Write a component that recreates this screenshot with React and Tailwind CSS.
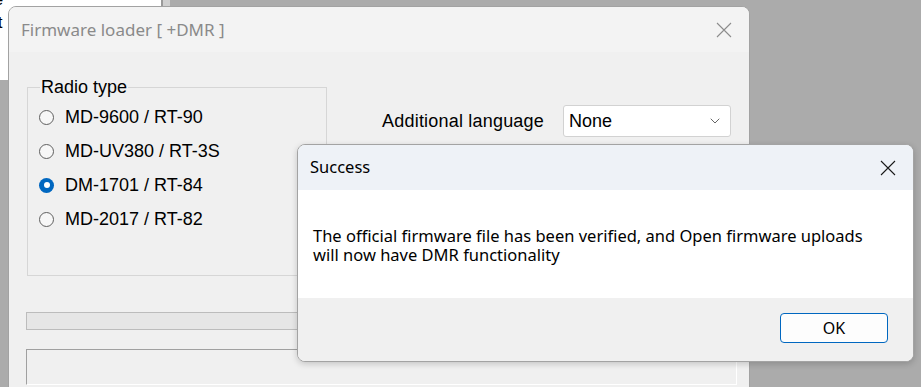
import React from 'react';
import { ChevronDown } from 'lucide-react';

const radios = [
  { label: 'MD-9600 / RT-90', checked: false },
  { label: 'MD-UV380 / RT-3S', checked: false },
  { label: 'DM-1701 / RT-84', checked: true },
  { label: 'MD-2017 / RT-82', checked: false },
];

const CloseIcon = ({ color }) => (
  <svg width="16" height="16" viewBox="0 0 16 16" fill="none" stroke={color} strokeWidth="1.1">
    <path d="M1 1 L15 15 M15 1 L1 15" />
  </svg>
);

const Radio = ({ checked }) =>
  checked ? (
    <span className="flex h-[15px] w-[15px] items-center justify-center rounded-full bg-[#0067c0]">
      <span className="h-[6px] w-[6px] rounded-full bg-white" />
    </span>
  ) : (
    <span className="h-[15px] w-[15px] rounded-full border border-[#5f5f5f] bg-[#f7f7f7]" />
  );

const App = () => {
  return (
    <div className="relative h-[387px] w-[921px] overflow-hidden bg-[#ababab]" style={{ fontFamily: '"Liberation Sans", Arial, sans-serif' }}>
      {/* window behind, top-left */}
      <div className="absolute left-0 top-0 flex h-[80px]">
        <div className="relative h-full w-[163px] overflow-hidden border-r-2 border-[#9a9a9a] bg-white text-[16px] text-black">
          <span className="absolute left-[-11px] top-[-12px]">re</span>
          <span className="absolute left-[-10px] top-[11px]">xt</span>
        </div>
        <div className="h-full w-[7px] bg-[#cfcfcf]" />
      </div>

      {/* main window */}
      <div className="absolute left-[8px] top-[6px] h-[400px] w-[742px] overflow-hidden rounded-t-[8px] border border-[#a2a2a2] bg-[#f0f0f0]">
        <div className="flex h-[45px] items-center justify-between bg-[#f3f3f3] pl-[12px] pr-[17px]">
          <span className="text-[17px] text-[#8a8a8a]" style={{ fontFamily: '"Noto Sans", sans-serif' }}>
            Firmware loader [ +DMR ]
          </span>
          <CloseIcon color="#8c8c8c" />
        </div>

        <div className="flex flex-col pl-[18px] pr-[18px] text-[18px] text-black">
          <div className="flex">
            <fieldset className="mt-[25px] h-[199px] w-[300px] border border-[#d6d6d6] pl-[11px]">
              <legend className="ml-[1px] px-[1px] leading-[20px]">Radio type</legend>
              <div className="flex flex-col pt-[3px]">
                {radios.map((r) => (
                  <label key={r.label} className="flex h-[34px] items-center gap-[11px]">
                    <Radio checked={r.checked} />
                    <span>{r.label}</span>
                  </label>
                ))}
              </div>
            </fieldset>

            <div className="flex flex-1 items-start justify-end pt-[53px]">
              <div className="flex items-center gap-[19px]">
                <span className="tracking-[0.2px]">Additional language</span>
                <div className="flex h-[32px] w-[168px] items-center justify-between rounded-[3px] border border-[#d2d2d2] bg-white pl-[5px] pr-[7px]">
                  <span>None</span>
                  <ChevronDown size={16} strokeWidth={1.5} color="#666" />
                </div>
              </div>
            </div>
          </div>

          <div className="ml-[-1px] mt-[36px] h-[18px] w-[711px] border border-[#bcbcbc] bg-[#e6e6e6]" />
          <div className="ml-[-1px] mt-[19px] h-[36px] w-[711px] border border-l-[#a0a0a0] border-t-[#a0a0a0] border-b-white border-r-white bg-[#f0f0f0]" />
        </div>
      </div>

      {/* Success message box */}
      <div
        className="absolute left-[297px] top-[144px] flex h-[218px] w-[617px] flex-col overflow-hidden rounded-[8px] border border-[#a3a3a3] bg-white shadow-[0_2px_6px_rgba(0,0,0,0.18)]"
        style={{ fontFamily: '"Noto Sans", sans-serif' }}
      >
        <div className="flex h-[45px] items-center justify-between bg-[#eef2f7] pl-[12px] pr-[17px]">
          <span className="text-[16.5px] text-black">Success</span>
          <CloseIcon color="#1a1a1a" />
        </div>
        <div className="h-[108px] bg-white pl-[15px] pt-[36px] text-[16.5px] leading-[19px] text-black">
          <p>The official firmware file has been verified, and Open firmware uploads</p>
          <p>will now have DMR functionality</p>
        </div>
        <div className="flex flex-1 items-start justify-end bg-[#f0f0f0] pr-[25px] pt-[15px]">
          <button className="flex h-[30px] w-[108px] items-center justify-center rounded-[4px] border-[1.5px] border-[#0067c0] bg-[#fdfdfd] text-[16px] text-black">
            OK
          </button>
        </div>
      </div>
    </div>
  );
};

export default App;
